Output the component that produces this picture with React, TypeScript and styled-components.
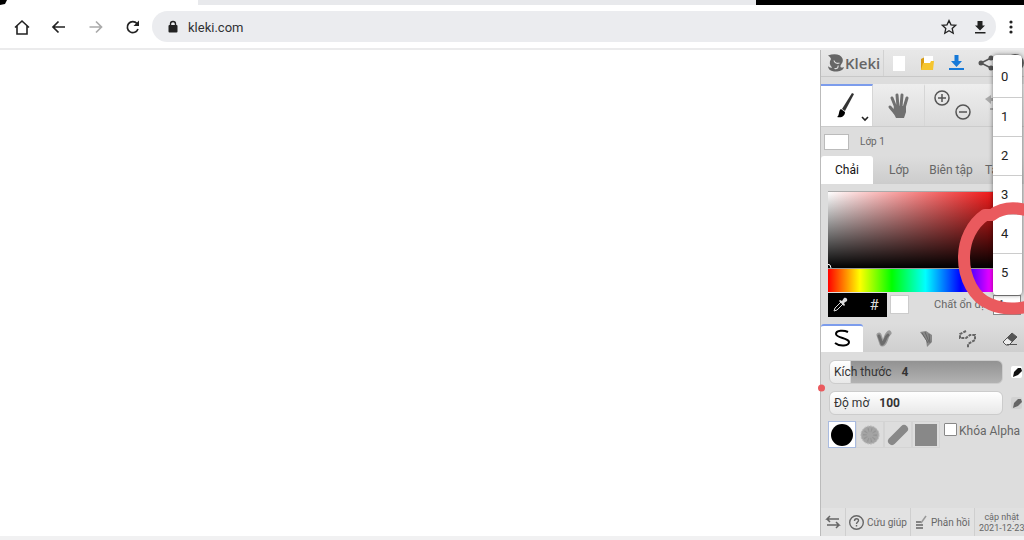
import React from 'react';
import styled, { createGlobalStyle } from 'styled-components';

const Global = createGlobalStyle`
  *, *::before, *::after { box-sizing: border-box; }
  html, body, #root { height: 100%; margin: 0; }
  body { font-family: Roboto, "Liberation Sans", sans-serif; background: #f1f1f2; color: #222; overflow: hidden; }
  button, input, select { font: inherit; color: inherit; }
  button { border: 0; padding: 0; background: none; display: flex; align-items: center; justify-content: center; flex: none; }
  svg { display: block; flex: none; overflow: visible; }
`;

const Browser = styled.div`
  height: 100vh;
  display: flex;
  flex-direction: column;
  padding-bottom: 4px;
`;
const TabStrip = styled.div`
  height: 5px;
  flex: none;
  display: flex;
  background: #000;
`;
const ActiveTab = styled.div`
  flex: 0 0 198px;
  background: #fff;
  clip-path: polygon(7px 0, 100% 0, 100% 100%, 0 100%, 5px 4px);
`;
const OtherTabs = styled.div`
  flex: 0 1 558px;
  background: #e8e9ec;
`;
const Toolbar = styled.header`
  height: 45px;
  flex: none;
  display: flex;
  align-items: center;
  padding: 0 4px 0 13px;
  background: #fff;
  border-bottom: 2px solid #ebebec;
`;
const NavGroup = styled.nav`
  display: flex;
  gap: 19px;
  margin-right: 10px;
`;
const NavButton = styled.button`
  width: 18px;
  height: 18px;
`;
const MenuButton = styled.button`
  width: 18px;
  height: 20px;
  margin-left: 6px;
`;
const AddressBar = styled.div`
  flex: 1;
  min-width: 0;
  height: 31px;
  display: flex;
  align-items: center;
  gap: 15px;
  padding: 0 8px 0 15px;
  border-radius: 16px;
  background: #ebecef;
`;
const Url = styled.input`
  flex: 1;
  min-width: 0;
  border: 0;
  padding: 1px 0 0;
  margin-left: -6px;
  outline: 0;
  background: none;
  color: #303134;
  font-size: 13px;
`;
const Main = styled.main`
  flex: 1;
  min-height: 0;
  display: flex;
  background: #fff;
`;
const Canvas = styled.section`
  flex: 1;
  min-width: 0;
`;
const Panel = styled.aside`
  position: relative;
  flex: 0 0 204px;
  min-width: 0;
  display: flex;
  flex-direction: column;
  background: #ddd;
  border-left: 1px solid #bbb;
  color: #666;
`;
const Row = styled.div`
  display: flex;
  flex: none;
  overflow: hidden;
  white-space: nowrap;
`;
const HeaderRow = styled(Row)`
  height: 27px;
  background: linear-gradient(#e8e8e8, #dedede);
  border-bottom: 1px solid #c8c8c8;
`;
const Logo = styled.a`
  flex: 0 0 63px;
  display: flex;
  align-items: center;
  gap: 1px;
  padding-left: 6px;
  color: #666;
  font: 600 15px "Open Sans", sans-serif;
  text-decoration: none;
  border-right: 1px solid #d2d2d2;
`;
const HeaderButton = styled.button`
  width: 29px;
`;
const ToolRow = styled(Row)`
  height: 43px;
  margin-top: 7px;
  background: linear-gradient(#eee, #dcdcdc);
  border-bottom: 1px solid #ccc;
`;
const Tool = styled.button<{ $active?: boolean }>`
  width: 52px;
  background: ${p => (p.$active ? '#fff' : 'none')};
  border-top: 2px solid ${p => (p.$active ? '#7c9cec' : 'transparent')};
  border-right: 1px solid #d6d6d6;
`;
const ZoomTool = styled(Tool)`
  width: 54px;
  border-right: 0;
`;
const UndoTool = styled(Tool)`
  width: 36px;
  border-right: 0;
`;
const LayerRow = styled(Row)`
  height: 29px;
  align-items: center;
  gap: 11px;
  padding-left: 3px;
  font-size: 10px;
`;
const LayerThumb = styled.div`
  width: 25px;
  height: 16px;
  background: #fff;
  border: 1px solid #bbb;
`;
const Tabs = styled(Row)`
  height: 28px;
  background: linear-gradient(#ddd, #ccc);
`;
const Tab = styled.button<{ $active?: boolean }>`
  width: 52px;
  font-size: 12px;
  color: ${p => (p.$active ? '#111' : '#666')};
  background: ${p => (p.$active ? '#fff' : 'none')};
  border-radius: 3px 3px 0 0;
`;
const Picker = styled.div`
  margin: 7px 0 0 7px;
  width: 168px;
  flex: none;
`;
const Shade = styled.div`
  height: 77px;
  overflow: hidden;
  border-top: 1px solid #aaa;
  background: linear-gradient(transparent, #000), linear-gradient(90deg, #fff, #f01414);
`;
const ShadeCursor = styled.svg`
  margin: 72px 0 0 -5px;
`;
const Hue = styled.div`
  height: 24px;
  border-top: 1px solid #999;
  background: linear-gradient(90deg, #f00, #ff0 19%, #0f0 38%, #0ff 58%, #00f 79%, #f0f 98%);
`;
const ColorRow = styled(Row)`
  height: 25px;
  padding: 0 2px 0 7px;
  align-items: center;
`;
const ColorTools = styled.div`
  display: flex;
  flex: none;
  width: 59px;
  height: 24px;
  background: #000;
  color: #ddd;
  font-size: 15px;
`;
const ColorButton = styled.button`
  width: 24px;
  & + & { margin-left: 10px; }
`;
const Secondary = styled.button`
  width: 19px;
  height: 19px;
  margin: 0 25px 0 3px;
  background: #fff;
  border: 1px solid #ccc;
`;
const Stabilizer = styled.label`
  display: flex;
  flex: none;
  align-items: center;
  font-size: 11px;
`;
const StabilizerText = styled.span`
  width: 59px;
`;
const StabSelect = styled.select`
  position: relative;
  width: 28px;
  height: 20px;
  padding: 0 0 0 4px;
  appearance: none;
  background: #fff;
  border: 1px solid #888;
  border-radius: 0;
  color: #222;
  font-size: 12px;
`;
const BrushTabs = styled(Row)`
  height: 28px;
  margin-top: 7px;
  background: linear-gradient(#ddd, #cfcfcf);
`;
const BrushTab = styled(Tool)`
  width: 42px;
  border-right: 0;
  border-radius: 3px 3px 0 0;
`;
const Sliders = styled.div`
  display: flex;
  flex-direction: column;
  gap: 7px;
  padding: 8px 0 0 8px;
`;
const SliderRow = styled(Row)`
  align-items: center;
  gap: 8px;
`;
const Slider = styled.div<{ $fill: number }>`
  width: 174px;
  height: 24px;
  flex: none;
  display: flex;
  align-items: center;
  gap: 10px;
  padding-left: 4px;
  border: 1px solid #ccc;
  border-radius: 6px;
  font-size: 12px;
  color: #333;
  background:
    linear-gradient(#fff, #e8e8e8) 0 0 / ${p => p.$fill}% 100% no-repeat,
    linear-gradient(#929292, #b2b2b2);
`;
const Pressure = styled.button<{ $on?: boolean }>`
  width: 11px;
  height: 12px;
  border-radius: 2px;
  background: ${p => (p.$on ? '#fff' : '#d2d2d2')};
  color: ${p => (p.$on ? '#111' : '#666')};
`;
const TipRow = styled(Row)`
  margin-top: 6px;
  padding-left: 7px;
  height: 27px;
`;
const Tip = styled.button<{ $active?: boolean }>`
  width: 28px;
  height: 27px;
  background: ${p => (p.$active ? '#fff' : 'none')};
  border: 1px solid ${p => (p.$active ? '#a9bbe0' : '#d4d4d4')};
`;
const AlphaLock = styled.label`
  display: flex;
  flex: none;
  gap: 2px;
  padding-left: 4px;
  font-size: 12px;
  line-height: 20px;
`;
const Checkbox = styled.input`
  appearance: none;
  width: 13px;
  height: 13px;
  margin: 2px 0 0;
  background: #fff;
  border: 1px solid #888;
  border-radius: 1px;
`;
const Footer = styled(Row)`
  height: 28px;
  margin-top: auto;
  font-size: 10px;
  line-height: 11px;
  background: #e0e0e0;
`;
const FooterButton = styled.button<{ $w: number }>`
  width: ${p => p.$w}px;
  gap: 3px;
  background: #e2e2e2;
  border-right: 1px solid #cfcfcf;
`;
const Version = styled.div`
  flex: 1;
  padding: 4px 0 0 4px;
  text-align: center;
  font-size: 9px;
`;
const Options = styled.ul`
  position: absolute;
  top: 5px;
  right: 2px;
  width: 29px;
  margin: 0;
  padding: 3px 0;
  list-style: none;
  background: #fff;
  border-radius: 4px;
  box-shadow: 0 0 4px rgba(0, 0, 0, 0.5);
  color: #222;
  font-size: 13px;
`;
const Option = styled.li`
  height: 39px;
  padding-left: 8px;
  line-height: 38px;
  & + & { border-top: 1px solid #ccc; }
`;
const Marks = styled.svg`
  position: absolute;
  top: 0;
  right: 0;
  pointer-events: none;
`;

const stroke = { fill: 'none', stroke: 'currentColor', strokeWidth: 2 };

function Pen() {
  return (
    <svg width="10" height="10" viewBox="0 0 10 10" fill="currentColor">
      <path d="M1 10l1-5 4-4 3 0 1 3-4 4z" />
    </svg>
  );
}

export default function App() {
  return (
    <Browser>
      <Global />
      <TabStrip><ActiveTab /><OtherTabs /></TabStrip>
      <Toolbar>
        <NavGroup>
          <NavButton aria-label="Home">
            <svg width="18" height="18" viewBox="0 0 18 18" {...stroke} strokeWidth="1.6"><path d="M2 9.500L9 3l7 6.500M4 8v8h10V8" /></svg>
          </NavButton>
          <NavButton aria-label="Back">
            <svg width="18" height="18" viewBox="0 0 18 18" {...stroke} strokeWidth="1.7"><path d="M15 9H3M8.500 3.500L3 9 8.500 14.500" /></svg>
          </NavButton>
          <NavButton aria-label="Forward">
            <svg width="18" height="18" viewBox="0 0 18 18" fill="none" stroke="#aaa" strokeWidth="1.7"><path d="M2.500 9h12M9 3.500L14.500 9 9 14.500" /></svg>
          </NavButton>
          <NavButton aria-label="Reload">
            <svg width="18" height="18" viewBox="0 0 18 18" {...stroke} strokeWidth="1.7"><path d="M13 5.500A5.500 5.500 0 1 0 14 11" /><path d="M15 2.500V8H9.500z" fill="currentColor" stroke="none" /></svg>
          </NavButton>
        </NavGroup>
        <AddressBar>
          <svg width="12" height="14" viewBox="0 0 12 14"><rect x="1.500" y="5" width="9" height="7.500" rx="1" fill="#222" /><path d="M3.500 5.500V4a2.500 2.500 0 0 1 5 0v1.500" fill="none" stroke="#222" strokeWidth="1.400" /></svg>
          <Url aria-label="Address" defaultValue="kleki.com" />
          <button aria-label="Bookmark">
            <svg width="16" height="16" viewBox="0 0 16 16" {...stroke} strokeWidth="1.3"><path d="M8 1.500l2 4.300 4.700.5-3.500 3.200 1 4.700L8 11.800l-4.200 2.400 1-4.700L1.300 6.300 6 5.800z" /></svg>
          </button>
          <button aria-label="Download">
            <svg width="16" height="16" viewBox="0 0 16 16" fill="#222"><path d="M5.500 2h5v4.500H13L8 11.500 3 6.500h2.500zM3 13h10.500v1.400H3z" /></svg>
          </button>
        </AddressBar>
        <MenuButton aria-label="Menu">
          <svg width="4" height="14" viewBox="0 0 4 14" fill="#222"><circle cx="2" cy="2" r="1.600" /><circle cx="2" cy="7" r="1.600" /><circle cx="2" cy="12" r="1.600" /></svg>
        </MenuButton>
      </Toolbar>
      <Main>
        <Canvas />
        <Panel>
          <HeaderRow>
            <Logo href="#">
              <svg width="17" height="18" viewBox="0 0 17 18" fill="#666"><path d="M1 1.500C7-1 14 0 15.500 4.500 17 9 13 10 13.500 13c1 1 2 .5 3.500 0-1 4-6 5-10 4.500C3 17 1 15 1 12c1 1.500 3 2 4 1.500C2.500 11 2 8 4 5 3.500 3.500 2.500 2.500 1 1.500z" /><path d="M7 6.500c.5 2.500 3 3.500 5.500 2.500M7.500 14.500c2.500.5 4-1 3.500-3" fill="none" stroke="#ddd" strokeWidth="1.200" /></svg>
              Kleki
            </Logo>
            <HeaderButton aria-label="New"><svg width="12" height="15"><rect width="12" height="15" fill="#fff" /></svg></HeaderButton>
            <HeaderButton aria-label="Open">
              <svg width="15" height="16" viewBox="0 0 15 16"><path d="M1 4l4-2v13H1z" fill="#d79b13" /><rect x="4" y="1" width="9" height="9" fill="#fff" /><path d="M1 15l2-7h7l1-2h3l-1 9z" fill="#f5c52f" /></svg>
            </HeaderButton>
            <HeaderButton aria-label="Save">
              <svg width="15" height="16" viewBox="0 0 15 16" fill="#1679d8"><path d="M5.500 0h4v6H13l-5.500 6L2 6h3.500zM0 13h15v2H0z" /></svg>
            </HeaderButton>
            <HeaderButton aria-label="Share">
              <svg width="16" height="16" viewBox="0 0 16 16" fill="#555"><path d="M13 3L3 8l10 5" fill="none" stroke="#555" strokeWidth="1.500" /><circle cx="13" cy="3" r="2.500" /><circle cx="3" cy="8" r="2.500" /><circle cx="13" cy="13" r="2.500" /></svg>
            </HeaderButton>
            <HeaderButton aria-label="Help"><svg width="18" height="18" {...stroke}><circle cx="9" cy="9" r="8" /></svg></HeaderButton>
          </HeaderRow>
          <ToolRow>
            <Tool $active aria-label="Brush">
              <svg width="42" height="36" viewBox="0 0 42 36"><path d="M26 5L16 21l3 2L28 6z" fill="#333" /><path d="M15 21l4 3c0 4-3 6-8 5 3-2 1-6 4-8z" fill="#000" /><path d="M36 29l3 3 3-3" {...stroke} stroke="#222" strokeWidth="1.6" /></svg>
            </Tool>
            <Tool aria-label="Hand">
              <svg width="22" height="26" viewBox="0 0 22 26" {...stroke} stroke="#707070" strokeWidth="3" strokeLinecap="round"><path d="M8 15L4 5M10 14L9 2M13 14L14 2M16 15l3-10M7 20l-5-6" /><path d="M6 13h12v6l-2 6H8l-3-6z" fill="#707070" stroke="none" /></svg>
            </Tool>
            <ZoomTool aria-label="Zoom">
              <svg width="36" height="34" viewBox="0 0 36 34" {...stroke} stroke="#555" strokeWidth="1.5"><circle cx="8" cy="9" r="7" /><path d="M4 9h8M8 5v8" /><circle cx="29" cy="23" r="7" /><path d="M25 23h8" /></svg>
            </ZoomTool>
            <UndoTool aria-label="Undo">
              <svg width="24" height="30" viewBox="0 0 24 30" fill="#aaa"><path d="M0 8l6-4v3h10v3H6v3zM5 17h12v2H5z" /></svg>
            </UndoTool>
          </ToolRow>
          <LayerRow><LayerThumb />Lớp 1</LayerRow>
          <Tabs role="tablist">
            <Tab role="tab" $active>Chải</Tab>
            <Tab role="tab">Lớp</Tab>
            <Tab role="tab">Biên tập</Tab>
            <Tab role="tab">Tập tin</Tab>
          </Tabs>
          <Picker>
            <Shade><ShadeCursor width="8" height="8" fill="none" stroke="#fff"><circle cx="4" cy="4" r="4" /></ShadeCursor></Shade>
            <Hue />
          </Picker>
          <ColorRow>
            <ColorTools>
              <ColorButton aria-label="Eyedropper">
                <svg width="16" height="16" viewBox="0 0 16 16"><path d="M2 14l1-3 6-6 2 2-6 6z" fill="none" stroke="#ddd" /><path d="M8 3l2 1 2-3c2-1 4 1 3 3l-3 2 1 2-1 1-5-5z" fill="#ddd" /></svg>
              </ColorButton>
              <ColorButton aria-label="Hex">#</ColorButton>
            </ColorTools>
            <Secondary aria-label="Secondary color" />
            <Stabilizer><StabilizerText>Chất ổn định</StabilizerText><StabSelect defaultValue="1"><option>1</option></StabSelect></Stabilizer>
          </ColorRow>
          <BrushTabs>
            <BrushTab $active aria-label="Pen"><svg width="18" height="20" viewBox="0 0 18 20" {...stroke} stroke="#000"><path d="M15 3C11 1 3 1 3 5s13 4 13 8-9 5-14 1" /></svg></BrushTab>
            <BrushTab aria-label="Blend"><svg width="18" height="18" viewBox="0 0 18 18" fill="none" stroke="#999" strokeWidth="5" strokeLinecap="round" strokeLinejoin="round"><path d="M4 5l3 9c4 0 3-8 7-11" /><path d="M4 6l3 8c3-1 3-7 6-9" stroke="#6c6c6c" strokeWidth="3" /></svg></BrushTab>
            <BrushTab aria-label="Sketchy"><svg width="16" height="18" viewBox="0 0 16 18"><path d="M2 2l6-1 6 4v7l-5 5-1-7z" fill="#888" /><path d="M4 3l6 10M7 2l4 10M11 4l1 9" stroke="#666" /></svg></BrushTab>
            <BrushTab aria-label="Pixel"><svg width="18" height="18" viewBox="0 0 18 18" {...stroke} strokeDasharray="3 1"><path d="M7 1L1 4v4h6l4-3h5v5l-7 4v4" /></svg></BrushTab>
            <BrushTab aria-label="Eraser"><svg width="16" height="16" viewBox="0 0 16 16"><path d="M2 10L10 2l5 4-8 8H4l-3-3z" fill="#eee" stroke="#555" /><path d="M5 7l5-5 5 4-5 5zM5 13h10v1H5z" fill="#555" /></svg></BrushTab>
          </BrushTabs>
          <Sliders>
            <SliderRow><Slider $fill={12} role="slider" aria-label="Kích thước" aria-valuenow={4}>Kích thước <b>4</b></Slider><Pressure $on aria-label="Size pressure"><Pen /></Pressure></SliderRow>
            <SliderRow><Slider $fill={100} role="slider" aria-label="Độ mờ" aria-valuenow={100}>Độ mờ <b>100</b></Slider><Pressure aria-label="Opacity pressure"><Pen /></Pressure></SliderRow>
          </Sliders>
          <TipRow>
            <Tip $active aria-label="Round"><svg width="22" height="22"><circle cx="11" cy="11" r="11" /></svg></Tip>
            <Tip aria-label="Chalk"><svg width="20" height="20"><circle cx="10" cy="10" r="9" fill="#a4a4a4" stroke="#b8b8b8" strokeDasharray="2 1" /><circle cx="10" cy="10" r="5" fill="none" stroke="#959595" strokeWidth="4" strokeDasharray="1 2" /></svg></Tip>
            <Tip aria-label="Calligraphy"><svg width="22" height="22"><path d="M5 17L17 5" stroke="#888" strokeWidth="8" strokeLinecap="round" /></svg></Tip>
            <Tip aria-label="Square"><svg width="22" height="22"><rect width="22" height="22" fill="#888" /></svg></Tip>
            <AlphaLock><Checkbox type="checkbox" />Khóa Alpha</AlphaLock>
          </TipRow>
          <Footer>
            <FooterButton $w={25} aria-label="Swap side"><svg width="14" height="14" viewBox="0 0 14 14" {...stroke} strokeWidth="1.5"><path d="M13 4H1l3-3M1 4l3 3M1 10h12l-3-3M13 10l-3 3" /></svg></FooterButton>
            <FooterButton $w={65}><svg width="15" height="15" viewBox="0 0 15 15" {...stroke} strokeWidth="1.4"><circle cx="7.500" cy="7.500" r="6.800" /><path d="M5.500 6c0-3 4-3 4-.5 0 1.500-2 1.500-2 3.500M7.500 10v1.500" /></svg>Cứu giúp</FooterButton>
            <FooterButton $w={64}><svg width="13" height="14" viewBox="0 0 13 14" {...stroke} strokeWidth="1.5"><path d="M1 7h5M1 10h7M1 13h7" /><path d="M6 8l5-7" stroke="#999" /></svg>Phản hồi</FooterButton>
            <Version>cập nhật<br />2021-12-23</Version>
          </Footer>
          <Options role="listbox" aria-label="Chất ổn định">
            {[0, 1, 2, 3, 4, 5].map(n => <Option key={n} role="option">{n}</Option>)}
          </Options>
          <Marks width="208" height="486" viewBox="816 50 208 486">
            <path d="M1026 210C1010 206 1000 209 992 215L985 215C972 224 964 240 964 258C964 278 974 298 990 304C1001 309 1012 310 1026 307" fill="none" stroke="#ea5a5e" strokeWidth="12" strokeLinejoin="round" />
            <circle cx="821.500" cy="388" r="3.500" fill="#ea5a5e" />
          </Marks>
        </Panel>
      </Main>
    </Browser>
  );
}
